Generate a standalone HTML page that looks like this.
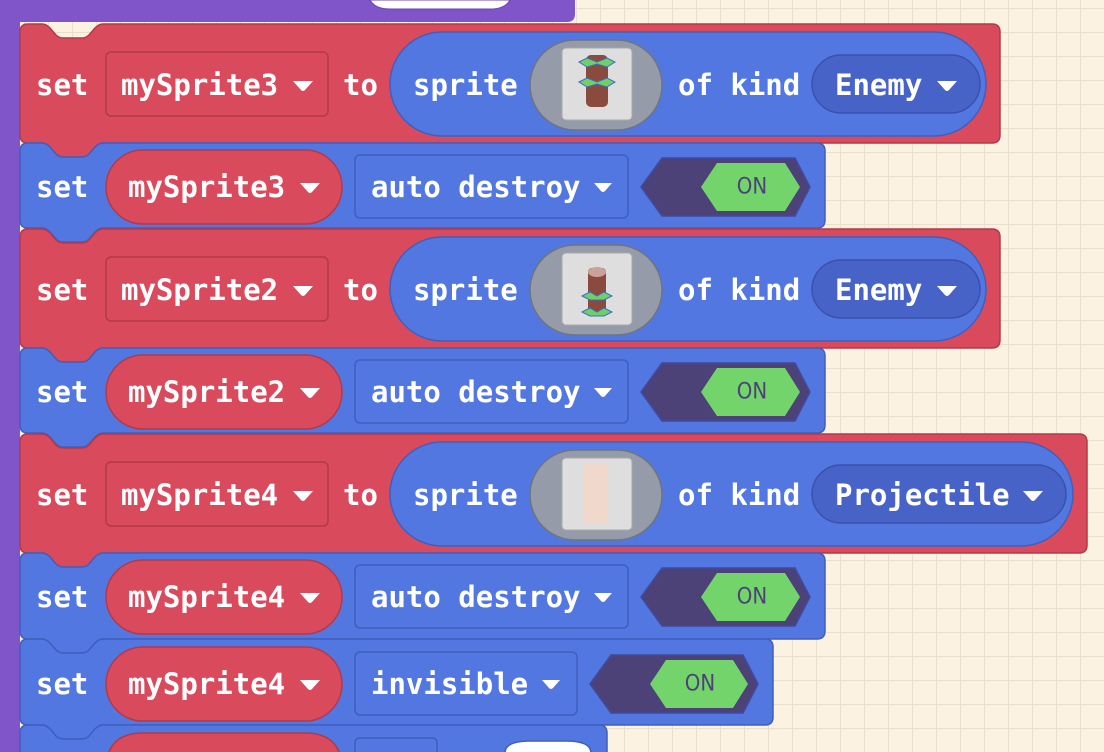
<!DOCTYPE html>
<html><head><meta charset="utf-8"><style>
html,body{margin:0;padding:0;width:1104px;height:752px;overflow:hidden;
background-color:#fcf2e1;
background-image:linear-gradient(#eadfcd 1px,transparent 1px),linear-gradient(90deg,#eadfcd 1px,transparent 1px);
background-size:24px 24px;background-position:0 8px}
svg{position:absolute;left:0;top:0;overflow:hidden}
text{font-family:"DejaVu Sans Mono","Liberation Mono",monospace;font-size:29px;font-weight:bold;fill:#fff;dominant-baseline:central}
.on{font-size:22px;font-weight:normal;fill:#4c4278;font-family:"DejaVu Sans Condensed","Liberation Sans Narrow",sans-serif;text-anchor:middle}
.tri{fill:#fff}
</style></head><body>
<svg width="1104" height="752" viewBox="0 0 1104 752">
<path d="M0,0 H575 V14 Q575,22 567,22 H20 V752 H0 Z" fill="#7f55c9"/>
<path d="M370,0 H510 Q505,9 490,9 H390 Q375,9 370,0Z" fill="#fff" stroke="#6a45b0"/>

<g stroke-width="1.5">
<path d="M20,32 Q20,24 28,24 H42 Q46,24 50,28 L56,35 Q59,38 63,38 H82 Q86,38 89,35 L95,28 Q99,24 103,24 H992 Q1000,24 1000,32 V135 Q1000,143 992,143 H103 Q99,143 95,147 L89,154 Q86,157 82,157 H63 Q59,157 56,154 L50,147 Q46,143 42,143 H28 Q20,143 20,135 Z" fill="#d94b5c" stroke="#b23a4a"/>
<path d="M20,151 Q20,143 28,143 H42 Q46,143 50,147 L56,154 Q59,157 63,157 H82 Q86,157 89,154 L95,147 Q99,143 103,143 H817 Q825,143 825,151 V220 Q825,228 817,228 H103 Q99,228 95,232 L89,239 Q86,242 82,242 H63 Q59,242 56,239 L50,232 Q46,228 42,228 H28 Q20,228 20,220 Z" fill="#5277e0" stroke="#3f5fbe"/>
<path d="M20,237 Q20,229 28,229 H42 Q46,229 50,233 L56,240 Q59,243 63,243 H82 Q86,243 89,240 L95,233 Q99,229 103,229 H992 Q1000,229 1000,237 V340 Q1000,348 992,348 H103 Q99,348 95,352 L89,359 Q86,362 82,362 H63 Q59,362 56,359 L50,352 Q46,348 42,348 H28 Q20,348 20,340 Z" fill="#d94b5c" stroke="#b23a4a"/>
<path d="M20,356 Q20,348 28,348 H42 Q46,348 50,352 L56,359 Q59,362 63,362 H82 Q86,362 89,359 L95,352 Q99,348 103,348 H817 Q825,348 825,356 V425 Q825,433 817,433 H103 Q99,433 95,437 L89,444 Q86,447 82,447 H63 Q59,447 56,444 L50,437 Q46,433 42,433 H28 Q20,433 20,425 Z" fill="#5277e0" stroke="#3f5fbe"/>
<path d="M20,442 Q20,434 28,434 H42 Q46,434 50,438 L56,445 Q59,448 63,448 H82 Q86,448 89,445 L95,438 Q99,434 103,434 H1079 Q1087,434 1087,442 V545 Q1087,553 1079,553 H103 Q99,553 95,557 L89,564 Q86,567 82,567 H63 Q59,567 56,564 L50,557 Q46,553 42,553 H28 Q20,553 20,545 Z" fill="#d94b5c" stroke="#b23a4a"/>
<path d="M20,561 Q20,553 28,553 H42 Q46,553 50,557 L56,564 Q59,567 63,567 H82 Q86,567 89,564 L95,557 Q99,553 103,553 H817 Q825,553 825,561 V631 Q825,639 817,639 H103 Q99,639 95,643 L89,650 Q86,653 82,653 H63 Q59,653 56,650 L50,643 Q46,639 42,639 H28 Q20,639 20,631 Z" fill="#5277e0" stroke="#3f5fbe"/>
<path d="M20,647 Q20,639 28,639 H42 Q46,639 50,643 L56,650 Q59,653 63,653 H82 Q86,653 89,650 L95,643 Q99,639 103,639 H765 Q773,639 773,647 V717 Q773,725 765,725 H103 Q99,725 95,729 L89,736 Q86,739 82,739 H63 Q59,739 56,736 L50,729 Q46,725 42,725 H28 Q20,725 20,717 Z" fill="#5277e0" stroke="#3f5fbe"/>
<path d="M20,733 Q20,725 28,725 H42 Q46,725 50,729 L56,736 Q59,739 63,739 H82 Q86,739 89,736 L95,729 Q99,725 103,725 H599 Q607,725 607,733 V753 H20 Z" fill="#5277e0" stroke="#3f5fbe"/>
</g>

<rect x="106" y="52" width="222" height="64" rx="5" fill="#d94b5c" stroke="#b23a4a" stroke-width="1.5"/>
<rect x="390" y="32" width="596" height="104" rx="52" fill="#5277e0" stroke="#3f5fbe" stroke-width="1.5"/>
<rect x="530" y="40" width="132" height="90" rx="45" fill="#959ba8" stroke="#6f7480" stroke-width="1.5"/>
<rect x="562" y="48" width="70" height="72" rx="4" fill="#dedede" stroke="#a9a9a9"/>
<rect x="812" y="55" width="168" height="58" rx="29" fill="#4763c8" stroke="#3a52ad" stroke-width="1.5"/>
<text x="36" y="85">set</text><text x="121" y="85">mySprite3</text><text x="343" y="85">to</text>
<text x="413" y="85">sprite</text><text x="678" y="85">of kind</text><text x="835" y="85">Enemy</text>
<rect x="586" y="55" width="22" height="52" rx="5" fill="#8a4a3d"/>
<path d="M579,62 L587,58 L597,62 L607,58 L615,62 L607,67 L597,64 L587,67Z M579,82 L587,78 L597,82 L607,78 L615,82 L607,87 L597,84 L587,87Z" fill="#6fd06a" stroke="#3a6fc0"/>

<rect x="106" y="257" width="222" height="64" rx="5" fill="#d94b5c" stroke="#b23a4a" stroke-width="1.5"/>
<rect x="390" y="237" width="596" height="104" rx="52" fill="#5277e0" stroke="#3f5fbe" stroke-width="1.5"/>
<rect x="530" y="245" width="132" height="90" rx="45" fill="#959ba8" stroke="#6f7480" stroke-width="1.5"/>
<rect x="562" y="253" width="70" height="72" rx="4" fill="#dedede" stroke="#a9a9a9"/>
<rect x="812" y="260" width="168" height="58" rx="29" fill="#4763c8" stroke="#3a52ad" stroke-width="1.5"/>
<text x="36" y="290">set</text><text x="121" y="290">mySprite2</text><text x="343" y="290">to</text>
<text x="413" y="290">sprite</text><text x="678" y="290">of kind</text><text x="835" y="290">Enemy</text>
<rect x="588" y="268" width="18" height="46" rx="4" fill="#8a4a3d"/>
<ellipse cx="597" cy="272" rx="9" ry="5" fill="#c9a39a"/>
<path d="M582,296 L590,292 L597,296 L604,292 L612,296 L604,300 L590,300Z M582,312 L590,308 L597,312 L604,308 L612,312 L604,316 L590,316Z" fill="#6fd06a" stroke="#3a6fc0"/>

<rect x="106" y="462" width="222" height="64" rx="5" fill="#d94b5c" stroke="#b23a4a" stroke-width="1.5"/>
<rect x="390" y="442" width="683" height="104" rx="52" fill="#5277e0" stroke="#3f5fbe" stroke-width="1.5"/>
<rect x="530" y="450" width="132" height="90" rx="45" fill="#959ba8" stroke="#6f7480" stroke-width="1.5"/>
<rect x="562" y="458" width="70" height="72" rx="4" fill="#dedede" stroke="#a9a9a9"/>
<rect x="584" y="464" width="24" height="60" fill="#f0d8cc"/>
<rect x="812" y="465" width="254" height="58" rx="29" fill="#4763c8" stroke="#3a52ad" stroke-width="1.5"/>
<text x="36" y="495">set</text><text x="121" y="495">mySprite4</text><text x="343" y="495">to</text>
<text x="413" y="495">sprite</text><text x="678" y="495">of kind</text><text x="835" y="495">Projectile</text>

<g stroke-width="1.5">
<rect x="106" y="150" width="236" height="74" rx="37" fill="#d94b5c" stroke="#b23a4a"/>
<rect x="355" y="155" width="273" height="63" rx="5" fill="#5277e0" stroke="#3f5fbe"/>
<path d="M641,187 L662,158 H795 L810,187 L795,216 H662 Z" fill="#4c4278" stroke="#3f4aa0"/>
<path d="M701,187 L717,163 H785 L800,187 L785,211 H717 Z" fill="#73d46c"/>

<rect x="106" y="355" width="236" height="74" rx="37" fill="#d94b5c" stroke="#b23a4a"/>
<rect x="355" y="360" width="273" height="63" rx="5" fill="#5277e0" stroke="#3f5fbe"/>
<path d="M641,392 L662,363 H795 L810,392 L795,421 H662 Z" fill="#4c4278" stroke="#3f4aa0"/>
<path d="M701,392 L717,368 H785 L800,392 L785,416 H717 Z" fill="#73d46c"/>

<rect x="106" y="560" width="236" height="74" rx="37" fill="#d94b5c" stroke="#b23a4a"/>
<rect x="355" y="565" width="273" height="63" rx="5" fill="#5277e0" stroke="#3f5fbe"/>
<path d="M641,597 L662,568 H795 L810,597 L795,626 H662 Z" fill="#4c4278" stroke="#3f4aa0"/>
<path d="M701,597 L717,573 H785 L800,597 L785,621 H717 Z" fill="#73d46c"/>

<rect x="106" y="647" width="236" height="74" rx="37" fill="#d94b5c" stroke="#b23a4a"/>
<rect x="355" y="652" width="222" height="63" rx="5" fill="#5277e0" stroke="#3f5fbe"/>
<path d="M590,684 L611,655 H743 L758,684 L743,713 H611 Z" fill="#4c4278" stroke="#3f4aa0"/>
<path d="M650,684 L666,660 H733 L748,684 L733,708 H666 Z" fill="#73d46c"/>

<path d="M106,753 V770 Q106,733 143,733 H305 Q342,733 342,770 V753 Z" fill="#d94b5c" stroke="#b23a4a"/>
<path d="M355,753 V743 Q355,738 360,738 H432 Q437,738 437,743 V753" fill="#5277e0" stroke="#3f5fbe"/>
<path d="M505,753 Q505,741 530,741 H566 Q591,741 591,753 Z" fill="#fff" stroke="#3f5fbe"/>
</g>
<text x="36" y="187">set</text><text x="128" y="187">mySprite3</text><text x="371" y="187">auto destroy</text><text class="on" x="752" y="187">ON</text>
<text x="36" y="392">set</text><text x="128" y="392">mySprite2</text><text x="371" y="392">auto destroy</text><text class="on" x="752" y="392">ON</text>
<text x="36" y="597">set</text><text x="128" y="597">mySprite4</text><text x="371" y="597">auto destroy</text><text class="on" x="752" y="597">ON</text>
<text x="36" y="684">set</text><text x="128" y="684">mySprite4</text><text x="371" y="684">invisible</text><text class="on" x="700" y="684">ON</text>

<g class="tri">
<path d="M293,81 H313 L305,90 Q303,92 301,90 Z"/>
<path d="M293,286 H313 L305,295 Q303,297 301,295 Z"/>
<path d="M293,491 H313 L305,500 Q303,502 301,500 Z"/>
<path d="M937,81 H957 L949,90 Q947,92 945,90 Z"/>
<path d="M937,286 H957 L949,295 Q947,297 945,295 Z"/>
<path d="M1023,491 H1043 L1035,500 Q1033,502 1031,500 Z"/>
<path d="M300,183 H320 L312,192 Q310,194 308,192 Z"/>
<path d="M300,388 H320 L312,397 Q310,399 308,397 Z"/>
<path d="M300,593 H320 L312,602 Q310,604 308,602 Z"/>
<path d="M300,680 H320 L312,689 Q310,691 308,689 Z"/>
<path d="M594,183 H612 L605,191 Q603,193 601,191 Z"/>
<path d="M594,388 H612 L605,396 Q603,398 601,396 Z"/>
<path d="M594,593 H612 L605,601 Q603,603 601,601 Z"/>
<path d="M542,680 H560 L553,688 Q551,690 549,688 Z"/>
</g>
</svg>
</body></html>
